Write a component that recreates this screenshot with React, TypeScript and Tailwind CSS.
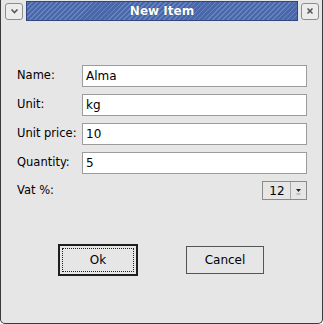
import React from "react";

const font = { fontFamily: '"DejaVu Sans", sans-serif' };

function Field({ label, value }: { label: string; value: string }) {
  return (
    <div className="flex items-center h-[22px]">
      <div className="w-[65px] text-[11.5px] text-black">{label}</div>
      <div className="flex-1 h-[22px] bg-white border border-[#9c9c9c] flex items-center pl-[3px] text-[12px] text-black">
        {value}
      </div>
    </div>
  );
}

export default function App() {
  return (
    <div style={font} className="w-[323px] h-[324px] bg-[#e6e6e6] border-x border-b border-[#3a3a3a] rounded-b-[5px] flex flex-col overflow-hidden">
      {/* Title bar */}
      <div className="h-[22px] flex items-center pl-[4px] pr-[3px] gap-[3px] bg-[#e6e6e6]">
        <div className="w-[18px] h-[17px] rounded-[3px] border border-[#8d8d8d] bg-[#ececec] flex items-center justify-center">
          <svg width="9" height="6" viewBox="0 0 9 6">
            <path d="M1.5 1.5 L4.5 4.5 L7.5 1.5" stroke="#555" strokeWidth="1.6" fill="none" />
          </svg>
        </div>
        <div className="flex-1 h-[20px] border border-[#2f4680] bg-[repeating-linear-gradient(135deg,#6783c2_0px,#6783c2_1.2px,#4a67a9_1.2px,#4a67a9_3.5px)] flex items-center justify-center">
          <span className="text-white font-bold text-[12px] [text-shadow:0_0_1px_#1c2c5c]">New Item</span>
        </div>
        <div className="w-[18px] h-[17px] rounded-[3px] border border-[#8d8d8d] bg-[#ececec] flex items-center justify-center">
          <svg width="8" height="8" viewBox="0 0 8 8">
            <path d="M1.5 1.5 L6.5 6.5 M6.5 1.5 L1.5 6.5" stroke="#555" strokeWidth="1.6" />
          </svg>
        </div>
      </div>

      {/* Body */}
      <div className="pt-[43px] pl-[16px] pr-[15px] flex flex-col gap-[7px]">
        <Field label="Name:" value="Alma" />
        <Field label="Unit:" value="kg" />
        <Field label="Unit price:" value="10" />
        <Field label="Quantity:" value="5" />
        <div className="flex items-center justify-between h-[19px]">
          <div className="text-[11.5px] text-black">Vat %:</div>
          <div className="flex h-[19px] w-[45px] border border-[#8a8a8a] bg-[#e6e6e6]">
            <div className="w-[27px] flex items-center justify-center text-[12px] text-black pl-[1px]">12</div>
            <div className="flex-1 border-l border-[#a8a8a8] flex flex-col items-center justify-center">
              <svg width="7" height="8" viewBox="0 0 7 8">
                <path d="M1 2 L6 2 L3.5 5 Z" fill="#222" />
                <path d="M1.5 7 L5.5 7" stroke="#999" strokeWidth="1" />
              </svg>
            </div>
          </div>
        </div>
      </div>

      {/* Buttons */}
      <div className="flex items-center pl-[57px] mt-[44px] gap-[48px]">
        <div className="w-[80px] h-[32px] border-2 border-[#1e1e1e] bg-[#e6e6e6] p-[2px]">
          <div className="w-full h-full border border-dotted border-[#222] flex items-center justify-center text-[12px] text-black">
            Ok
          </div>
        </div>
        <div className="w-[78px] h-[28px] border border-[#555] bg-[#e6e6e6] flex items-center justify-center text-[12px] text-black">
          Cancel
        </div>
      </div>
    </div>
  );
}
